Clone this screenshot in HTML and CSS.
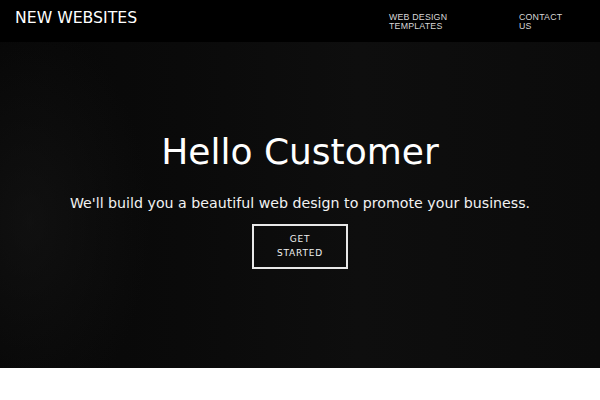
FILE: index.html
```html
<!DOCTYPE html>
<html>
<head>
<meta charset="utf-8">
<link rel="stylesheet" href="styles.css">
</head>
<body>
<header class="topbar">
  <div class="brand">NEW WEBSITES</div>
  <nav class="nav">
    <a class="nav-link" href="#">WEB DESIGN<br>TEMPLATES</a>
    <a class="nav-link" href="#">CONTACT<br>US</a>
  </nav>
</header>
<section class="hero">
  <h1 class="hero-title">Hello Customer</h1>
  <p class="hero-sub">We'll build you a beautiful web design to promote your business.</p>
  <a class="hero-btn" href="#">GET<br>STARTED</a>
</section>
</body>
</html>
```
FILE: styles.css
```css
html, body {
  margin: 0;
  padding: 0;
  background: #ffffff;
}
body {
  font-family: "DejaVu Sans", sans-serif;
  width: 600px;
  height: 400px;
  overflow: hidden;
}
.topbar {
  height: 42px;
  background: #000000;
  display: flex;
  align-items: flex-start;
  justify-content: space-between;
  box-sizing: border-box;
}
.brand {
  color: #ffffff;
  font-size: 15.7px;
  padding: 8px 0 0 15px;
}
.nav {
  display: flex;
  padding-top: 13px;
}
.nav-link {
  color: #d8d8d8;
  text-decoration: none;
  font-family: "Liberation Sans", sans-serif;
  font-size: 8.8px;
  line-height: 8.5px;
  letter-spacing: 0.2px;
}
.nav-link:first-child {
  width: 130px;
}
.nav-link:last-child {
  width: 81px;
}
.hero {
  height: 326px;
  background:
    radial-gradient(ellipse 120px 200px at 30px 180px, rgba(25,25,25,0.5), rgba(0,0,0,0)),
    linear-gradient(90deg, #070707 0%, #0a0a0a 30%, #0e0e0e 60%, #0b0b0b 100%);
  display: flex;
  flex-direction: column;
  align-items: center;
  color: #ffffff;
}
.hero-title {
  font-weight: normal;
  font-size: 36px;
  margin: 88px 0 0 0;
  line-height: 44px;
}
.hero-sub {
  font-size: 14.2px;
  margin: 20px 0 0 0;
  line-height: 18px;
  color: #f2f2f2;
}
.hero-btn {
  margin-top: 12px;
  width: 96px;
  height: 45px;
  box-sizing: border-box;
  border: 2px solid #e8e8e8;
  color: #f0f0f0;
  text-decoration: none;
  font-size: 9px;
  line-height: 13.5px;
  letter-spacing: 0.8px;
  text-align: center;
  padding-top: 7px;
}
```
